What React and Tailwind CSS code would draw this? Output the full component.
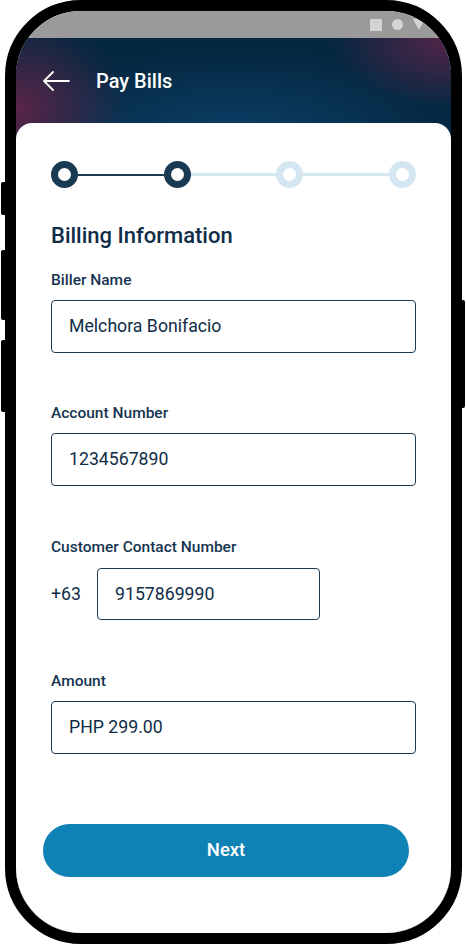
import React from "react";

function Step({ active }) {
  return (
    <div
      className={
        "w-[27px] h-[27px] rounded-full border-[7px] bg-white shrink-0 " +
        (active ? "border-[#183a53]" : "border-[#d3e6f1]")
      }
    />
  );
}

function Field({ label, value, className = "" }) {
  return (
    <div className={className}>
      <div className="text-[15.5px] leading-[20px] font-medium text-[#163450]">{label}</div>
      <div className="mt-[10px] h-[53px] w-[365px] rounded-[4px] border border-[#1d3a55] flex items-center pl-[17px] text-[17.7px] text-[#0f2d47]">
        {value}
      </div>
    </div>
  );
}

export default function App() {
  return (
    <div
      className="relative w-[466px] h-[945px] bg-white overflow-hidden"
      style={{ fontFamily: "Roboto, 'Noto Sans', Arial, sans-serif" }}
    >
      {/* side buttons */}
      <div className="absolute left-[1px] top-[182px] w-[6px] h-[33px] bg-black rounded-l-[2px]" />
      <div className="absolute left-[1px] top-[250px] w-[6px] h-[70px] bg-black rounded-l-[2px]" />
      <div className="absolute left-[1px] top-[340px] w-[6px] h-[72px] bg-black rounded-l-[2px]" />
      <div className="absolute left-[458px] top-[300px] w-[7px] h-[108px] bg-black rounded-r-[2px]" />

      <div className="relative ml-[5px] w-[457px] h-[944px] border-[11px] border-black rounded-[76px] overflow-hidden bg-white flex flex-col">
        {/* status bar */}
        <div className="h-[27px] bg-[#9a9a9a] flex items-center justify-end pr-[26px] gap-[10px] shrink-0">
          <div className="w-[12px] h-[12px] bg-[#d4d4d4]" />
          <div className="w-[11px] h-[11px] rounded-full bg-[#d4d4d4]" />
          <div className="w-[12px] h-[11px] bg-[#d4d4d4] [clip-path:polygon(0_0,100%_0,50%_100%)]" />
        </div>

        <div className="flex-1 flex flex-col bg-[#052740] bg-[radial-gradient(110px_90px_at_0px_70px,#5a2548_0%,rgba(90,37,72,0)_100%),radial-gradient(120px_70px_at_435px_0px,#572549_0%,rgba(87,37,73,0)_100%),radial-gradient(230px_90px_at_217px_100px,#0b4068_0%,rgba(5,39,64,0)_100%),linear-gradient(#052740,#052740)]">
          {/* header */}
          <div className="h-[85px] flex items-center shrink-0">
            <svg className="ml-[26px]" width="28" height="20" viewBox="0 0 28 20" fill="none">
              <path d="M27 10H2M11 1L2 10L11 19" stroke="white" strokeWidth="1.8" strokeLinecap="round" strokeLinejoin="round" />
            </svg>
            <span className="ml-[26px] text-white text-[20px] font-medium">Pay Bills</span>
          </div>

          {/* card */}
          <div className="flex-1 bg-white rounded-t-[16px] px-[35px] pt-[38px]">
            <div className="flex items-center w-[365px]">
              <Step active />
              <div className="flex-1 h-[2px] bg-[#183a53]" />
              <Step active />
              <div className="flex-1 h-[3px] bg-[#d3e6f1]" />
              <Step />
              <div className="flex-1 h-[3px] bg-[#d3e6f1]" />
              <Step />
            </div>

            <div className="mt-[34px] text-[22px] leading-[28px] font-medium text-[#0f2d47]">
              Billing Information
            </div>

            <Field className="mt-[20px]" label="Biller Name" value="Melchora Bonifacio" />
            <Field className="mt-[50px]" label="Account Number" value="1234567890" />

            <div className="mt-[51px]">
              <div className="text-[15.5px] leading-[20px] font-medium text-[#163450]">Customer Contact Number</div>
              <div className="mt-[11px] flex items-center">
                <span className="w-[46px] text-[17.7px] text-[#0f2d47]">+63</span>
                <div className="h-[52px] w-[223px] rounded-[4px] border border-[#1d3a55] flex items-center pl-[17px] text-[17.7px] text-[#0f2d47]">
                  9157869990
                </div>
              </div>
            </div>

            <Field className="mt-[51px]" label="Amount" value="PHP 299.00" />

            <button className="mt-[70px] -ml-[8px] w-[366px] h-[53px] rounded-full bg-[#0f82b5] text-white text-[18.5px] font-medium flex items-center justify-center">
              Next
            </button>
          </div>
        </div>
      </div>
    </div>
  );
}
